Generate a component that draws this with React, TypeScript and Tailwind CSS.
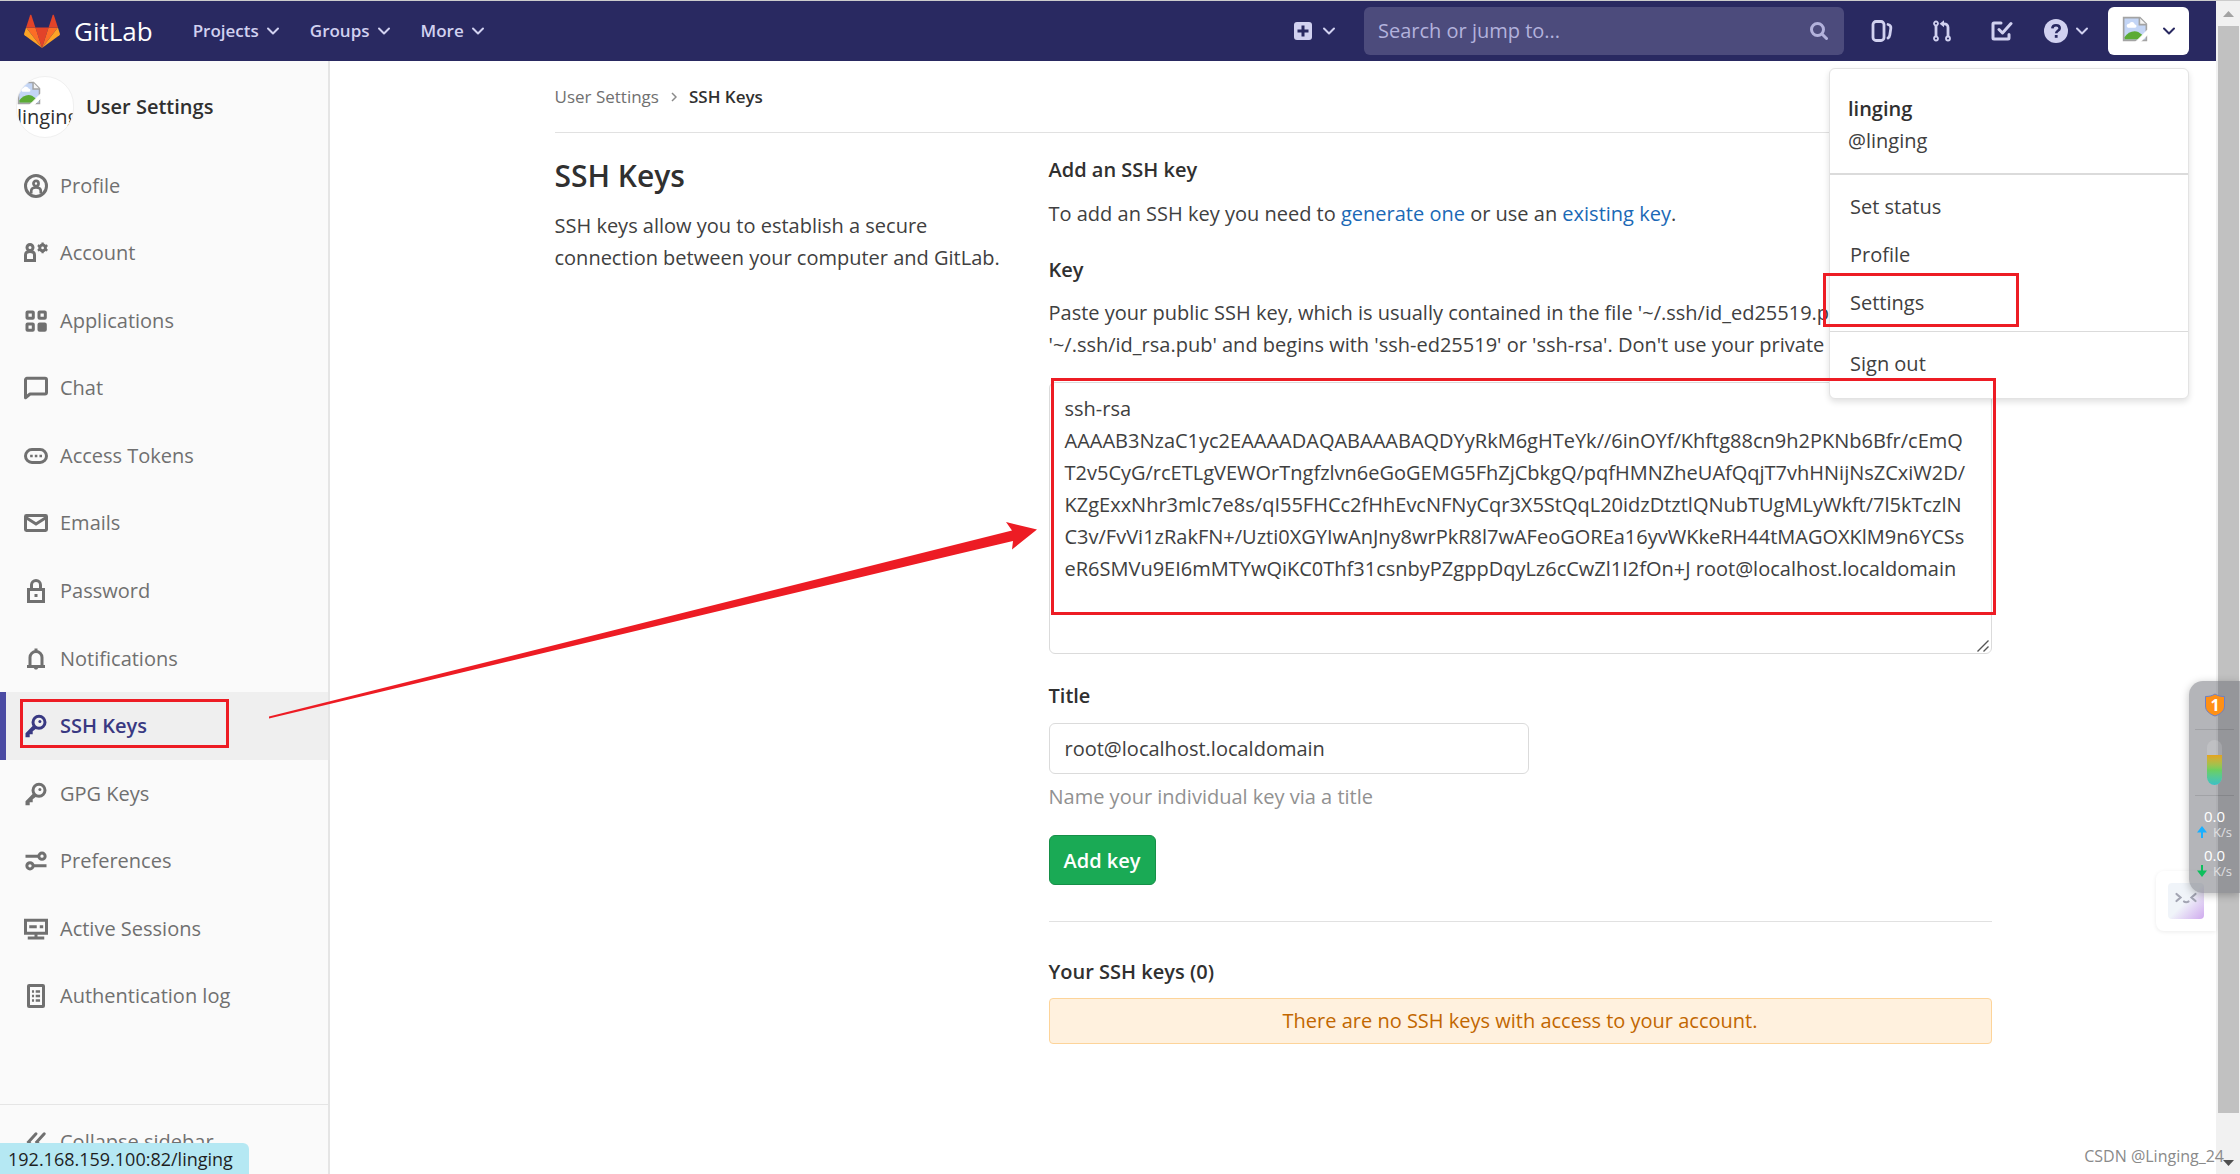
import type { ReactNode } from "react";

const Icon = ({ children, className = "size-6" }: { children: ReactNode; className?: string }) => (
  <svg viewBox="0 0 16 16" className={`shrink-0 ${className}`} fill="none" stroke="currentColor" strokeWidth="2" aria-hidden="true">
    {children}
  </svg>
);

const Chevron = () => (
  <svg viewBox="0 0 14 14" className="size-[14px] shrink-0" fill="none" stroke="currentColor" strokeWidth="2" strokeLinecap="round" strokeLinejoin="round" aria-hidden="true">
    <path d="M2 4.5l5 5 5-5" />
  </svg>
);

// Chrome's placeholder for an image that failed to load
const BrokenImage = ({ className }: { className: string }) => (
  <svg viewBox="0 0 16 16" className={`shrink-0 ${className}`} aria-hidden="true">
    <path d="M1 1h10l4 4v10H1z" fill="#c3d5f5" />
    <path d="M3 6.6a1.4 1.4 0 0 1 1.4-1.9 1.9 1.9 0 0 1 3.5.5 1 1 0 0 1 .1 2H3.6z" fill="#fff" />
    <path d="M1.5 14.5V13c2-3 5.5-4.5 8.5-3.2L13 12v2.5z" fill="#5bab35" />
    <path d="M1 1h10l4 4v10H1z" fill="none" stroke="#a3a3a3" />
    <path d="M10.7 1v4.3H15" fill="#f4f4f4" stroke="#a3a3a3" />
    <path d="M8.5 15.8L15.8 8.5v3l-4.300 4.300z" fill="#fff" stroke="#fff" strokeWidth="0.6" />
  </svg>
);

const keyIcon = (
  <Icon>
    <circle cx="10" cy="5.5" r="4" />
    <circle cx="10.6" cy="5" r="1" fill="currentColor" stroke="none" />
    <path d="M6.2 7.5L1 12.8v2.700h2.800v-2h2v-2l2.700-2z" fill="currentColor" stroke="none" />
  </Icon>
);

const navItems: { label: string; icon: ReactNode; active?: boolean }[] = [
  {
    label: "Profile",
    icon: (
      <Icon>
        <circle cx="8" cy="8" r="7" />
        <circle cx="8" cy="6.3" r="1.7" strokeWidth="1.8" />
        <path d="M4.8 13v-1.5C4.8 9.7 6.2 9 8 9s3.2.7 3.2 2.5V13" strokeWidth="1.8" />
      </Icon>
    ),
  },
  {
    label: "Account",
    icon: (
      <Icon>
        <circle cx="4" cy="4.3" r="2" />
        <path d="M1 13V9.3C1 7.5 2.3 7 4 7s3 .5 3 2.3V13z" />
        <circle cx="12.4" cy="4.6" r="1.9" />
        <path d="M12.4 1v1.6M12.4 6.6v1.6M9.2 2.8l1.4.8M14.2 5.6l1.4.8M9.2 6.4l1.4-.8M14.2 3.6l1.4-.8" strokeWidth="1.5" />
      </Icon>
    ),
  },
  {
    label: "Applications",
    icon: (
      <Icon>
        <rect x="2" y="2" width="4.2" height="4.2" rx=".4" />
        <rect x="10" y="2" width="4.2" height="4.2" rx=".4" />
        <rect x="2" y="10" width="4.2" height="4.2" rx=".4" />
        <rect x="10" y="10" width="4.2" height="4.2" rx=".4" fill="currentColor" />
      </Icon>
    ),
  },
  {
    label: "Chat",
    icon: (
      <Icon>
        <path d="M1 14.5v-12a1 1 0 0 1 1-1h12a1 1 0 0 1 1 1V11a1 1 0 0 1-1 1H4z" strokeLinejoin="round" />
      </Icon>
    ),
  },
  {
    label: "Access Tokens",
    icon: (
      <Icon>
        <rect x="1" y="3.7" width="14" height="8.6" rx="4.3" />
        <path d="M4.1 7.2h1.7v1.7H4.1zM7.2 7.2h1.7v1.7H7.2zM10.3 7.2H12v1.7h-1.7z" fill="currentColor" stroke="none" />
      </Icon>
    ),
  },
  {
    label: "Emails",
    icon: (
      <Icon>
        <rect x="1" y="3" width="14" height="10" rx=".6" />
        <path d="M1.5 4.5L8 8.7l6.5-4.2" />
      </Icon>
    ),
  },
  {
    label: "Password",
    icon: (
      <Icon>
        <path d="M3 7h10v8H3zM5 7V4a3 3 0 0 1 6 0v3" />
        <path d="M7 10h2v2H7z" fill="currentColor" stroke="none" />
      </Icon>
    ),
  },
  {
    label: "Notifications",
    icon: (
      <Icon>
        <path d="M2 13h12M4 12.5V7a4 4 0 0 1 8 0v5.5" />
        <path d="M6.5 14h3l-.8 1H7.3zM7 1h2v2H7z" fill="currentColor" stroke="none" />
      </Icon>
    ),
  },
  { label: "SSH Keys", icon: keyIcon, active: true },
  { label: "GPG Keys", icon: keyIcon },
  {
    label: "Preferences",
    icon: (
      <Icon>
        <circle cx="12" cy="4.8" r="2.1" />
        <circle cx="4" cy="11.2" r="2.1" />
        <path d="M1 4.8h9M6 11.2h9" />
      </Icon>
    ),
  },
  {
    label: "Active Sessions",
    icon: (
      <Icon>
        <path d="M1 2.2h14v8.6H1zM2.5 14h11" />
        <path d="M3.5 6.5h5M10.5 6.5h2.3M8 11v2.5" />
      </Icon>
    ),
  },
  {
    label: "Authentication log",
    icon: (
      <Icon>
        <rect x="3" y="1" width="10" height="14" rx=".4" />
        <path d="M5.3 5h1.4M7.8 5h2.9M5.3 8h1.4M7.8 8h2.9M5.3 11h1.4M7.8 11h2.9" strokeWidth="1.7" />
      </Icon>
    ),
  },
];

const menus = ["Projects", "Groups", "More"];

const sshKey = `ssh-rsa
AAAAB3NzaC1yc2EAAAADAQABAAABAQDYyRkM6gHTeYk//6inOYf/Khftg88cn9h2PKNb6Bfr/cEmQ
T2v5CyG/rcETLgVEWOrTngfzlvn6eGoGEMG5FhZjCbkgQ/pqfHMNZheUAfQqjT7vhHNijNsZCxiW2D/
KZgExxNhr3mlc7e8s/qI55FHCc2fHhEvcNFNyCqr3X5StQqL20idzDtztlQNubTUgMLyWkft/7l5kTczlN
C3v/FvVi1zRakFN+/Uzti0XGYIwAnJny8wrPkR8l7wAFeoGOREa16yvWKkeRH44tMAGOXKlM9n6YCSs
eR6SMVu9EI6mMTYwQiKC0Thf31csnbyPZgppDqyLz6cCwZl1I2fOn+J root@localhost.localdomain`;

const Logo = () => (
  <svg viewBox="0 0 36 34" className="h-[34px] w-9 shrink-0" aria-hidden="true">
    <path d="M18 34l6.6-20.4H11.4z" fill="#e24329" />
    <path d="M18 34l-6.6-20.4H2.1z" fill="#fc6d26" />
    <path d="M2.1 13.6l-2 6.2a1.4 1.4 0 0 0 .5 1.5L18 34z" fill="#fca326" />
    <path d="M2.1 13.6h9.3L7.4 1.2c-.2-.6-1.1-.6-1.3 0z" fill="#e24329" />
    <path d="M18 34l6.6-20.4h9.3z" fill="#fc6d26" />
    <path d="M33.9 13.6l2 6.2a1.4 1.4 0 0 1-.5 1.5L18 34z" fill="#fca326" />
    <path d="M33.9 13.6h-9.3l4-12.4c.2-.6 1.1-.6 1.3 0z" fill="#e24329" />
  </svg>
);

const UserMenu = () => (
  <div className="absolute top-[61px] right-0 z-20 w-90 rounded-md border border-[#e3e3e3] bg-white text-[#404040] shadow-[0_3px_6px_rgba(0,0,0,0.12)]">
    <div className="border-b-2 border-[#dbdbdb] px-[18px] pt-6 pb-4 leading-8">
      <div className="font-semibold text-[#303030]">linging</div>
      <div>@linging</div>
    </div>
    <ul className="pt-2">
      {["Set status", "Profile", "Settings"].map((item) => (
        <li key={item} className="relative">
          <a href="#" className="block px-5 leading-[48px]">
            {item}
          </a>
          {item === "Settings" && (
            <span className="pointer-events-none absolute top-[-6px] left-[-7px] h-[54px] w-49 border-3 border-[#ed1c24]" />
          )}
        </li>
      ))}
    </ul>
    <div className="mt-1 border-t border-[#dbdbdb] pt-2 pb-[10px]">
      <a href="#" className="block px-5 leading-[48px]">
        Sign out
      </a>
    </div>
  </div>
);

const Navbar = () => (
  <header className="flex h-[61px] items-center border-t border-[#ccc] bg-[#292961] pr-[27px] pl-6 text-[#d1d1f0]">
    <a href="#" className="flex items-center gap-[14px] text-[26px] leading-none text-white">
      <Logo />
      GitLab
    </a>
    <nav className="ml-10 flex gap-[30px]">
      {menus.map((menu) => (
        <button key={menu} type="button" className="flex items-center gap-[7px] text-[17px] font-semibold">
          {menu}
          <Chevron />
        </button>
      ))}
    </nav>
    <button type="button" aria-label="New" className="ml-auto flex items-center gap-[10px]">
      <svg viewBox="0 0 18 18" className="size-[18px]" aria-hidden="true">
        <rect width="18" height="18" rx="3" fill="currentColor" />
        <path d="M9 3.5v11M3.5 9h11" stroke="#292961" strokeWidth="3" />
      </svg>
      <Chevron />
    </button>
    <label className="ml-7 flex h-12 w-120 items-center rounded-md bg-[#4c4b7c] pr-4 pl-[14px]">
      <input type="text" aria-label="Search" placeholder="Search or jump to..." className="min-w-0 flex-1 outline-none placeholder:text-[#b3b2dc]" />
      <svg viewBox="0 0 18 18" className="size-[18px]" fill="none" stroke="#b3b2dc" strokeWidth="3" strokeLinecap="round" aria-hidden="true">
        <circle cx="7.5" cy="7.5" r="6" />
        <path d="M12 12l4.5 4.5" />
      </svg>
    </label>
    <a href="#" aria-label="Issues" className="ml-2 flex w-15 justify-center">
      <svg viewBox="0 0 22 22" className="size-[22px]" fill="none" stroke="currentColor" strokeWidth="2.8" strokeLinecap="round" aria-hidden="true">
        <rect x="2" y="1.5" width="11" height="19" rx="3" />
        <path d="M17 4.5c2.3.5 3.2 1.5 2.8 4l-1 6.5c-.3 1.7-.8 2.5-1.8 3" />
      </svg>
    </a>
    <a href="#" aria-label="Merge requests" className="flex w-15 justify-center">
      <svg viewBox="0 0 20 22" className="h-[22px] w-5" fill="none" stroke="currentColor" strokeWidth="1.8" aria-hidden="true">
        <circle cx="4" cy="3.5" r="2" />
        <circle cx="4" cy="18.5" r="2" />
        <circle cx="16" cy="18.5" r="2" />
        <path d="M4 6v10M16 16V7.5c0-2.500-1.500-3.700-4-3.700h-1" strokeWidth="2.8" />
        <path d="M12 .3v7L7.6 3.8z" fill="currentColor" stroke="none" />
      </svg>
    </a>
    <a href="#" aria-label="To-Do List" className="flex w-15 justify-center">
      <svg viewBox="0 0 22 22" className="size-[22px]" fill="none" stroke="currentColor" strokeWidth="3" strokeLinecap="round" strokeLinejoin="round" aria-hidden="true">
        <path d="M10 3H3a1 1 0 0 0-1 1v14a1 1 0 0 0 1 1h14a1 1 0 0 0 1-1v-3.5" />
        <path d="M8 9.5l3.5 3.5L20 3.500" />
      </svg>
    </a>
    <button type="button" aria-label="Help" className="ml-3 flex items-center gap-[7px]">
      <svg viewBox="0 0 24 24" className="size-6" fill="none" aria-hidden="true">
        <circle cx="12" cy="12" r="12" fill="currentColor" />
        <path d="M8.3 9.3C8.5 7.2 10 6.2 12 6.2c2.2 0 3.7 1.3 3.7 3.1 0 2.6-3.5 2.4-3.5 5" stroke="#292961" strokeWidth="2.6" />
        <path d="M10.8 16h2.8v2.8h-2.8z" fill="#292961" />
      </svg>
      <Chevron />
    </button>
    <div className="relative ml-[19px]">
      <button type="button" aria-label="linging" className="flex h-12 w-[81px] items-center rounded-md bg-white pl-[14px] text-[#292961]">
        <BrokenImage className="mb-1 size-[26px]" />
        <span className="ml-[14px]">
          <Chevron />
        </span>
      </button>
      <UserMenu />
    </div>
  </header>
);

const Sidebar = () => (
  <aside className="relative flex w-[330px] shrink-0 flex-col border-r-2 border-[#e5e5e5] bg-[#fafafa] text-[#707070]">
    <a href="#" className="flex h-[91px] items-center gap-3 pl-4 font-semibold text-[#303030]">
      <span className="h-[62px] w-[58px] overflow-hidden rounded-full border border-[#f0f0f0] bg-white leading-6 font-normal">
        <BrokenImage className="mt-1 size-6" />
        <span className="block">linging</span>
      </span>
      User Settings
    </a>
    <ul className="grid flex-1 auto-rows-fr">
      {navItems.map(({ label, icon, active }) => (
        <li key={label} className="relative">
          <a
            href="#"
            className={
              active
                ? "flex h-full items-center gap-3 border-l-6 border-[#4b4ba3] bg-[#efefef] pl-[18px] font-semibold text-[#393982]"
                : "flex h-full items-center gap-3 pl-6"
            }
          >
            {icon}
            {label}
          </a>
          {active && (
            <span className="pointer-events-none absolute top-[7px] left-5 h-[49px] w-[209px] border-3 border-[#ed1c24]" />
          )}
        </li>
      ))}
    </ul>
    <button type="button" className="mt-[74px] flex h-[70px] items-center gap-3 border-t border-[#e5e5e5] pt-1 pl-6">
      <Icon>
        <path d="M8 2.5L3 8l5 5.5M13.5 2.5L8.5 8l5 5.5" strokeLinecap="round" />
      </Icon>
      Collapse sidebar
    </button>
    <span className="absolute bottom-0 left-0 rounded-tr-md bg-[#b5e8f3] pt-[2px] pr-4 pl-2 text-[18px] leading-[29px] text-[#1f1f1f]">
      192.168.159.100:82/linging
    </span>
  </aside>
);

const KeyForm = () => (
  <form className="min-w-0 flex-1 pt-[21px] leading-8">
    <h5 className="font-semibold text-[#303030]">Add an SSH key</h5>
    <p className="mt-3">
      To add an SSH key you need to{" "}
      <a href="#" className="text-[#1b69b6]">
        generate one
      </a>{" "}
      or use an{" "}
      <a href="#" className="text-[#1b69b6]">
        existing key
      </a>
      .
    </p>
    <label htmlFor="key" className="mt-6 block font-semibold text-[#303030]">
      Key
    </label>
    <p className="mt-[11px]">
      Paste your public SSH key, which is usually contained in the file '~/.ssh/id_ed25519.pub' or
      <br />
      '~/.ssh/id_rsa.pub' and begins with 'ssh-ed25519' or 'ssh-rsa'. Don't use your private SSH key.
    </p>
    <div className="relative mt-[21px]">
      <textarea
        id="key"
        defaultValue={sshKey}
        className="block h-[272px] w-full resize-none rounded-md border border-[#dbdbdb] px-[15px] pt-[10px] outline-none"
      />
      <svg viewBox="0 0 12 12" className="pointer-events-none absolute right-[3px] bottom-[2px] size-3" stroke="#555" strokeWidth="1.4" aria-hidden="true">
        <path d="M.5 11.5l11-11M6.5 11.5l5-5" />
      </svg>
      <span className="pointer-events-none absolute -top-1 -right-1 left-[2px] z-30 h-[237px] border-3 border-[#ed1c24]" />
    </div>
    <label htmlFor="title" className="mt-[26px] block font-semibold text-[#303030]">
      Title
    </label>
    <input
      id="title"
      type="text"
      defaultValue="root@localhost.localdomain"
      className="mt-[11px] block h-[51px] w-120 rounded-md border border-[#dbdbdb] px-[15px] outline-none"
    />
    <p className="mt-[7px] text-[#919191]">Name your individual key via a title</p>
    <button type="button" className="mt-[22px] block h-[50px] rounded-md border border-[#168f48] bg-[#1aaa55] px-[14px] pt-[2px] font-semibold text-white">
      Add key
    </button>
    <hr className="mt-9 border-[#e1e1e1]" />
    <h5 className="mt-[34px] font-semibold text-[#303030]">Your SSH keys (0)</h5>
    <p className="mt-[10px] rounded-sm border border-[#fdd49a] bg-[#fff1de] py-[6px] text-center text-[#c26700]">
      There are no SSH keys with access to your account.
    </p>
  </form>
);

const Content = () => (
  <main className="min-w-0 flex-1 px-6 text-[#404040]">
    <div className="mx-auto max-w-[1437px]">
      <nav className="flex h-18 items-center gap-3 border-b border-[#e1e1e1] text-[17px]">
        <a href="#" className="text-[#707070]">
          User Settings
        </a>
        <svg viewBox="0 0 6 10" className="h-[10px] w-[6px]" fill="none" stroke="#8a8a8a" strokeWidth="1.5" aria-hidden="true">
          <path d="M1 1l4 4-4 4" />
        </svg>
        <a href="#" className="font-semibold text-[#303030]">
          SSH Keys
        </a>
      </nav>
      <div className="flex">
        <div className="w-[494px] shrink-0 pt-[23px] pr-8">
          <h4 className="text-[30px] leading-10 font-semibold text-[#303030]">SSH Keys</h4>
          <p className="mt-[14px] leading-8">SSH keys allow you to establish a secure connection between your computer and GitLab.</p>
        </div>
        <KeyForm />
      </div>
    </div>
  </main>
);

const Scrollbar = () => (
  <div className="flex w-6 shrink-0 flex-col border-t border-[#ccc] bg-[#f1f1f1]">
    <svg viewBox="0 0 24 25" className="h-[25px] w-6" aria-hidden="true">
      <path d="M7 16l5.5-6 5.5 6z" fill="#a3a3a3" />
    </svg>
    <div className="mr-px ml-[2px] flex-1 bg-[#c1c1c1]" />
    <svg viewBox="0 0 24 61" className="h-[61px] w-6" aria-hidden="true">
      <path d="M7 47h11l-5.5 6z" fill="#505050" />
    </svg>
  </div>
);

const Speed = ({ up }: { up?: boolean }) => (
  <div className="text-center leading-4 text-white">
    <div className="text-[15px]">0.0</div>
    <div className="flex items-center justify-center gap-[6px] text-[13px] text-[#e0e0e2]">
      <svg viewBox="0 0 10 12" className={up ? "h-3 w-[10px] text-[#1ab0ff]" : "h-3 w-[10px] rotate-180 text-[#0dbf5d]"} aria-hidden="true">
        <path d="M5 0l5 6.5H6V12H4V6.5H0z" fill="currentColor" />
      </svg>
      K/s
    </div>
  </div>
);

const DesktopWidgets = () => (
  <>
    {/* assistant button */}
    <div className="absolute top-[871px] right-6 z-30 flex size-15 items-center justify-center rounded-l-lg bg-white shadow-[0_1px_4px_rgba(0,0,0,0.08)]">
      <svg viewBox="0 0 36 36" className="size-9" fill="none" stroke="#a3a5b3" strokeWidth="2.2" strokeLinecap="round" aria-hidden="true">
        <defs>
          <linearGradient id="face" x1="0" y1="0" x2="1" y2="1">
            <stop offset="0.5" stopColor="#f0f4f9" />
            <stop offset="1" stopColor="#cfa9ee" />
          </linearGradient>
        </defs>
        <rect width="36" height="36" rx="4" fill="url(#face)" stroke="none" />
        <path d="M8.5 11l4 3.5-4 3.5M27.5 11l-4 3.5 4 3.5M16 18.5c1 1 3.5 1 4.5 0" />
      </svg>
    </div>
    {/* network speed monitor */}
    <div className="absolute top-[681px] right-0 z-30 flex h-[212px] w-[51px] flex-col items-center rounded-l-[14px] bg-[#6a6b74]/50 pt-3 shadow-[0_2px_8px_rgba(0,0,0,0.25)]">
      <svg viewBox="0 0 22 24" className="h-6 w-[22px]" aria-hidden="true">
        <path d="M11 1c3 2 6 2.500 9.500 2.500V13c0 5-4 8-9.500 10-5.500-2-9.500-5-9.500-10V3.500C5 3.500 8 3 11 1z" fill="#ff9015" stroke="#6b80c8" />
        <text x="11" y="17.5" textAnchor="middle" fill="#fff" fontSize="16" fontWeight="700">
          1
        </text>
      </svg>
      <div className="mt-3 h-px w-[39px] bg-black/10" />
      <div className="mt-[10px] h-[45px] w-[15px] overflow-hidden rounded-full bg-white/15 pt-[15px]">
        <div className="h-full bg-linear-to-b from-[#e3a31c] via-[#6bcf5f] to-[#3bc0c4]" />
      </div>
      <div className="mt-[10px] mb-3 h-px w-[39px] bg-black/10" />
      <div className="flex flex-col gap-[7px]">
        <Speed up />
        <Speed />
      </div>
    </div>
    <span className="absolute right-4 bottom-[6px] z-30 text-[16px] leading-6 text-[#8a8a8a]">CSDN @Linging_24</span>
  </>
);

export default function App() {
  return (
    <div className="relative flex min-h-screen overflow-hidden bg-white text-[20px] font-['Open_Sans','Noto_Sans',sans-serif]">
      <div className="flex min-w-0 flex-1 flex-col">
        <Navbar />
        <div className="flex flex-1">
          <Sidebar />
          <Content />
        </div>
      </div>
      <Scrollbar />
      <DesktopWidgets />
      {/* arrow from the sidebar entry to the key field */}
      <svg viewBox="0 0 770 200" className="pointer-events-none absolute top-[520px] left-[268px] z-30 h-[200px] w-[770px]" aria-hidden="true">
        <path d="M1 196.5L744 10.5L738 2L769 9.5L744 29.5L745 21L692 33.5L1 198.5z" fill="#ed1c24" />
      </svg>
    </div>
  );
}
